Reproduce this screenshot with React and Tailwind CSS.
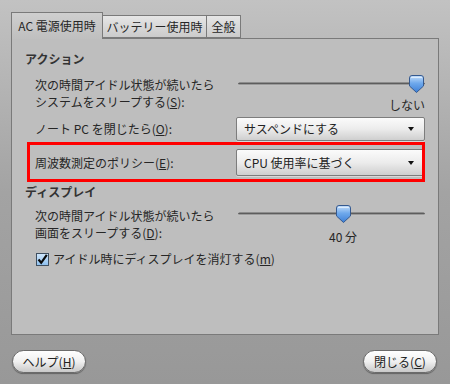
import React from "react";

const font = { fontFamily: '"Noto Sans CJK JP", "Noto Sans", sans-serif' };

function Combo({ text, h }) {
  return (
    <div
      className={`flex items-center justify-between rounded-[2px] border border-[#7d7d7d] bg-gradient-to-b from-[#fbfbfb] via-[#ececec] to-[#cfcfcf] pl-[7px] pr-[10px] shadow-[0_1px_0_rgba(255,255,255,0.4)] ${h}`}
    >
      <span className="text-[12px] leading-[16px] text-[#222]">{text}</span>
      <svg width="6" height="4" viewBox="0 0 6 4">
        <path d="M0 0 L6 0 L3 4 Z" fill="#111" />
      </svg>
    </div>
  );
}

function Thumb() {
  return (
    <svg width="15" height="18" viewBox="0 0 15 18">
      <defs>
        <linearGradient id="tg" x1="0" y1="0" x2="0" y2="1">
          <stop offset="0" stopColor="#c7e0fb" />
          <stop offset="0.45" stopColor="#6fa9ec" />
          <stop offset="1" stopColor="#3d7fd6" />
        </linearGradient>
      </defs>
      <path
        d="M0.5 3 Q0.5 0.5 3 0.5 L12 0.5 Q14.5 0.5 14.5 3 L14.5 11 L7.5 17.5 L0.5 11 Z"
        fill="url(#tg)"
        stroke="#35598f"
        strokeWidth="1"
      />
      <path d="M2 2.5 L13 2.5" stroke="#e8f3ff" strokeWidth="1" opacity="0.8" />
    </svg>
  );
}

function Slider({ left, h }) {
  return (
    <div className={`relative ml-[2px] ${h}`}>
      <div className="absolute left-0 right-0 top-1/2 h-[3px] -translate-y-1/2 rounded-full bg-[#5d5d5d] border-b border-[#d8d8d8]" />
      <div className="absolute top-0" style={{ left }}>
        <Thumb />
      </div>
    </div>
  );
}

function Btn({ children }) {
  return (
    <div className="flex h-[23px] w-[74px] items-center justify-center rounded-full border border-[#6b6b6b] bg-gradient-to-b from-[#ffffff] via-[#f0f0f0] to-[#c9c9c9] text-[12px] text-[#222] shadow-[0_1px_1px_rgba(0,0,0,0.35)]">
      {children}
    </div>
  );
}

export default function App() {
  return (
    <div
      className="flex h-[384px] w-[450px] flex-col overflow-hidden bg-gradient-to-b from-[#c2c2c2] via-[#a3a3a3] to-[#989898] text-[#262626]"
      style={font}
    >
      {/* tabs */}
      <div className="flex h-[26px] items-end pl-[11px] mt-[12px]">
        <div className="relative z-10 -mb-px flex h-[27px] w-[92px] items-center justify-center border border-b-0 border-[#7a7a7a] bg-gradient-to-b from-[#cfcfcf] to-[#bfbfbf] text-[12px]">
          AC 電源使用時
        </div>
        <div className="flex h-[23px] w-[104px] items-center justify-center border border-l-0 border-[#7a7a7a] bg-gradient-to-b from-[#e6e6e6] to-[#cbcbcb] text-[12px]">
          バッテリー使用時
        </div>
        <div className="flex h-[23px] w-[34px] items-center justify-center border border-l-0 border-[#7a7a7a] bg-gradient-to-b from-[#e6e6e6] to-[#cbcbcb] text-[12px]">
          全般
        </div>
      </div>

      {/* panel */}
      <div className="relative mx-[11px] h-[297px] border border-[#7a7a7a] bg-[#bebebe] px-[13px] text-[12px]">
        <div className="mt-[12px] h-[16px] font-bold leading-[16px] text-[#333]">アクション</div>

        <div className="mt-[9px] flex h-[34px] items-start pl-[10px]">
          <div className="w-[201px] leading-[17px]">
            <div>次の時間アイドル状態が続いたら</div>
            <div>
              システムをスリープする(<span className="underline">S</span>):
            </div>
          </div>
          <div className="flex-1">
            <div className="-mt-[1px]">
              <Slider left={171} h="h-[18px]" />
            </div>
            <div className="mt-[4px] text-right leading-[16px]">しない</div>
          </div>
        </div>

        <div className="mt-[7px] flex h-[24px] items-center pl-[10px]">
          <div className="w-[201px]">
            ノート PC を閉じたら(<span className="underline">O</span>):
          </div>
          <div className="flex-1">
            <Combo text="サスペンドにする" h="h-[24px]" />
          </div>
        </div>

        <div className="mt-[8px] flex h-[27px] items-center pl-[10px]">
          <div className="w-[201px]">
            周波数測定のポリシー(<span className="underline">E</span>):
          </div>
          <div className="flex-1">
            <Combo text="CPU 使用率に基づく" h="h-[27px]" />
          </div>
        </div>

        <div className="mt-[8px] h-[16px] font-bold leading-[16px] text-[#333]">ディスプレイ</div>

        <div className="mt-[7px] flex h-[34px] items-start pl-[10px]">
          <div className="w-[201px] leading-[17px]">
            <div>次の時間アイドル状態が続いたら</div>
            <div>
              画面をスリープする(<span className="underline">D</span>):
            </div>
          </div>
          <div className="flex-1">
            <div className="-mt-[2px]">
              <Slider left={98} h="h-[18px]" />
            </div>
            <div className="ml-[77px] mt-[6px] w-[60px] text-center leading-[16px]">40 分</div>
          </div>
        </div>

        <div className="mt-[10px] flex h-[16px] items-center pl-[11px]">
          <div className="flex h-[13px] w-[13px] items-center justify-center border border-[#3f4f60] bg-gradient-to-b from-[#cfe6fb] to-[#8ec0ee]">
            <svg width="11" height="11" viewBox="0 0 11 11">
              <path d="M1.5 5.5 L4.2 8.8 L9.8 0.8" fill="none" stroke="#0a0a0a" strokeWidth="2.2" />
            </svg>
          </div>
          <div className="ml-[4px] leading-[16px]">
            アイドル時にディスプレイを消灯する(<span className="underline">m</span>)
          </div>
        </div>

        {/* annotation box */}
        <div className="pointer-events-none absolute left-[15px] top-[103px] h-[40px] w-[398px] border-[3px] border-[#ff0000]" />
      </div>

      {/* bottom buttons */}
      <div className="mt-[15px] flex justify-between pl-[12px] pr-[13px]">
        <Btn>
          ヘルプ(<span className="underline">H</span>)
        </Btn>
        <Btn>
          閉じる(<span className="underline">C</span>)
        </Btn>
      </div>
    </div>
  );
}
